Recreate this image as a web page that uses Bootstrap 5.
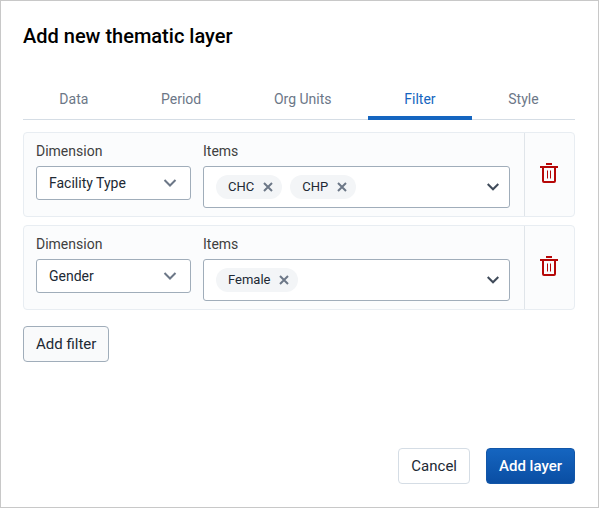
<!DOCTYPE html>
<html lang="en">
<head>
<meta charset="utf-8">
<meta name="viewport" content="width=device-width, initial-scale=1">
<title>Add new thematic layer</title>
<link href="https://cdn.jsdelivr.net/npm/bootstrap@5.3.0/dist/css/bootstrap.min.css" rel="stylesheet">
<style>
  body { font-family: Roboto, "Liberation Sans", sans-serif; font-size: 14px; line-height: 20px; color: #212934; background: #fff; }
  .layer-dialog { border: 1px solid #c8c8c8; padding: 21px 23px 23px 22px; }
  .dialog-title { font-size: 20px; line-height: 28px; font-weight: 500; color: #000; }
  .layer-tabs { border-bottom: 1px solid #d5dde5; margin-top: 25px; }
  .layer-tabs .nav-link { height: 45px; padding: 6px 10px 0; border: 0; border-radius: 0; background: none; border-bottom: 4px solid transparent; margin-bottom: -1px; color: #6c7787; }
  .layer-tabs .nav-link.active { color: #1565c0; border-bottom-color: #1565c0; }
  .filter-list { margin-top: 12px; }
  .filter-row { background: #fbfcfd; border: 1px solid #e8edf2; border-radius: 4px; min-height: 85px; }
  .filter-fields { gap: 12px; padding: 8px 14px 8px 12px; }
  .field-label { display: block; color: #404040; margin-bottom: 5px; }
  .dimension-field { flex: 0 0 155px; }
  .dimension-select { height: 34px; padding: 0 32px 0 12px; font-size: 14px; color: #212934; border: 1px solid #a0adba; border-radius: 3px;
    background-image: url("data:image/svg+xml,%3Csvg xmlns='http://www.w3.org/2000/svg' viewBox='0 0 14 10'%3E%3Cpath d='M1.5 2 7 7.5 12.5 2' fill='none' stroke='%236c7787' stroke-width='2'/%3E%3C/svg%3E");
    background-size: 14px 10px; background-position: right 13px center; }
  .items-box { min-height: 42px; padding: 4px 10px 4px 12px; background: #fff; border: 1px solid #a0adba; border-radius: 3px; }
  .item-chip { height: 24px; padding: 0 9px 0 12px; gap: 9px; background: #f3f5f7; font-size: 13px; }
  .plain-btn { display: inline-flex; padding: 0; border: 0; background: none; }
  .delete-cell { flex: 0 0 50px; padding: 0 2px 3px 0; border-left: 1px solid #e0e5ea; }
  .dialog-btn { height: 36px; padding: 0 12px; font-size: 15px; line-height: 20px; border-radius: 4px; color: #212934; }
  .btn-add-filter { background: #f9fafb; border-color: #a0adba; }
  .btn-cancel { background: #fff; border-color: #d5dde5; }
  .btn-add-layer { color: #fff; font-weight: 500; border-color: #1256a8; background-image: linear-gradient(#1565c0, #0a4ea3); }
  .btn-add-layer:hover { color: #fff; background-color: #0a4ea3; }
</style>
</head>
<body>
<main class="layer-dialog d-flex flex-column min-vh-100">
  <h1 class="dialog-title mb-0">Add new thematic layer</h1>

  <div class="layer-tabs nav nav-fill flex-nowrap" role="tablist">
    <button class="nav-link nav-item w-auto" type="button" role="tab" aria-selected="false">Data</button>
    <button class="nav-link nav-item w-auto" type="button" role="tab" aria-selected="false">Period</button>
    <button class="nav-link nav-item w-auto" type="button" role="tab" aria-selected="false">Org Units</button>
    <button class="nav-link nav-item w-auto active" type="button" role="tab" aria-selected="true">Filter</button>
    <button class="nav-link nav-item w-auto" type="button" role="tab" aria-selected="false">Style</button>
  </div>

  <div class="filter-list d-flex flex-column gap-2">
    <div class="filter-row d-flex">
      <div class="filter-fields d-flex flex-grow-1">
        <div class="dimension-field">
          <label class="field-label" for="dimension-1">Dimension</label>
          <select class="form-select dimension-select" id="dimension-1"><option>Facility Type</option><option>Gender</option></select>
        </div>
        <div class="flex-grow-1">
          <span class="field-label" id="items-1">Items</span>
          <div class="items-box d-flex align-items-center gap-2" role="group" aria-labelledby="items-1">
            <span class="item-chip d-inline-flex align-items-center rounded-pill">CHC
              <button class="plain-btn" type="button" aria-label="Remove CHC"><svg width="10" height="10" viewBox="0 0 10 10" fill="none" stroke="#6c7787" stroke-width="2"><path d="M1 1l8 8M9 1l-8 8"/></svg></button>
            </span>
            <span class="item-chip d-inline-flex align-items-center rounded-pill">CHP
              <button class="plain-btn" type="button" aria-label="Remove CHP"><svg width="10" height="10" viewBox="0 0 10 10" fill="none" stroke="#6c7787" stroke-width="2"><path d="M1 1l8 8M9 1l-8 8"/></svg></button>
            </span>
            <button class="plain-btn ms-auto" type="button" aria-label="Show items"><svg width="12" height="8" viewBox="0 0 12 8" fill="none" stroke="#404b5a" stroke-width="2"><path d="M.7 1L6 6.3 11.3 1"/></svg></button>
          </div>
        </div>
      </div>
      <div class="delete-cell d-flex align-items-center justify-content-center">
        <button class="plain-btn" type="button" aria-label="Delete filter"><svg width="18" height="22" viewBox="0 0 18 22" fill="none" stroke="#b60808"><path stroke-width="2" d="M6 2h6M0 5h18M3 5v14q0 1 1 1h10q1 0 1-1V5"/><path stroke-width="1" d="M7.5 8.5v8M10.5 8.5v8"/></svg></button>
      </div>
    </div>

    <div class="filter-row d-flex">
      <div class="filter-fields d-flex flex-grow-1">
        <div class="dimension-field">
          <label class="field-label" for="dimension-2">Dimension</label>
          <select class="form-select dimension-select" id="dimension-2"><option>Gender</option><option>Facility Type</option></select>
        </div>
        <div class="flex-grow-1">
          <span class="field-label" id="items-2">Items</span>
          <div class="items-box d-flex align-items-center gap-2" role="group" aria-labelledby="items-2">
            <span class="item-chip d-inline-flex align-items-center rounded-pill">Female
              <button class="plain-btn" type="button" aria-label="Remove Female"><svg width="10" height="10" viewBox="0 0 10 10" fill="none" stroke="#6c7787" stroke-width="2"><path d="M1 1l8 8M9 1l-8 8"/></svg></button>
            </span>
            <button class="plain-btn ms-auto" type="button" aria-label="Show items"><svg width="12" height="8" viewBox="0 0 12 8" fill="none" stroke="#404b5a" stroke-width="2"><path d="M.7 1L6 6.3 11.3 1"/></svg></button>
          </div>
        </div>
      </div>
      <div class="delete-cell d-flex align-items-center justify-content-center">
        <button class="plain-btn" type="button" aria-label="Delete filter"><svg width="18" height="22" viewBox="0 0 18 22" fill="none" stroke="#b60808"><path stroke-width="2" d="M6 2h6M0 5h18M3 5v14q0 1 1 1h10q1 0 1-1V5"/><path stroke-width="1" d="M7.5 8.5v8M10.5 8.5v8"/></svg></button>
      </div>
    </div>
  </div>

  <div class="mt-3">
    <button class="btn dialog-btn btn-add-filter" type="button">Add filter</button>
  </div>

  <div class="d-flex justify-content-end gap-3 mt-auto">
    <button class="btn dialog-btn btn-cancel" type="button">Cancel</button>
    <button class="btn dialog-btn btn-add-layer" type="button">Add layer</button>
  </div>
</main>
<script src="https://cdn.jsdelivr.net/npm/bootstrap@5.3.0/dist/js/bootstrap.bundle.min.js"></script>
</body>
</html>
